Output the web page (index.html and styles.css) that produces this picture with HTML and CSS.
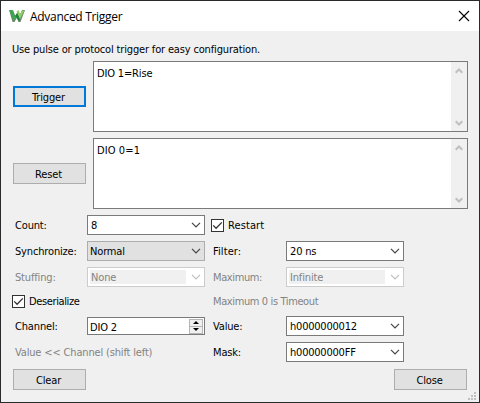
FILE: index.html
```html
<!DOCTYPE html>
<html lang="en">
<head>
<meta charset="utf-8">
<title>Advanced Trigger</title>
<link rel="stylesheet" href="styles.css">
</head>
<body>
<svg class="defs" width="0" height="0">
  <symbol id="down" viewBox="0 0 10 6"><path d="M1 .8 5 4.800 9 .8" fill="none" stroke="currentColor" stroke-width="1.2"/></symbol>
  <symbol id="check" viewBox="0 0 11 11"><path d="M1.200 5.400 4.100 8.300 9.800 2.400" fill="none" stroke="currentColor" stroke-width="1.3"/></symbol>
  <symbol id="thick" viewBox="0 0 8 6"><path d="M.7 4.800 4 1.500 7.300 4.800" fill="none" stroke="currentColor" stroke-width="2"/></symbol>
</svg>
<div class="window">
  <header class="titlebar">
    <svg class="logo" width="16" height="12" viewBox="0 0 16 12">
      <path d="M0 0h4l2.200 5.500L8.500 2l2 4L13 0h3l-4.500 12h-2L7.800 8 5.500 12h-2z" fill="#6f8a70"/>
      <path d="M.8.600h3L6.200 8 4.600 11z" fill="#35ab4c"/>
      <path d="M6.300 5.800 8.500 3l2.500 6-.8 2.500z" fill="#168a3c"/>
      <path d="M7.500 1.500 9.500 0l1.500 3.500L13.700.500h1.600L11 9z" fill="#93cf68"/>
    </svg>
    <h1 class="title">Advanced Trigger</h1>
    <svg class="close" width="12" height="12" viewBox="0 0 12 12"><path d="M1 1 11 11M11 1 1 11" stroke="#000" stroke-width="1.1"/></svg>
  </header>
  <main class="content">
    <p class="hint">Use pulse or protocol trigger for easy configuration.</p>
    <div class="event">
      <button class="btn focus">Trigger</button>
      <div class="area"><span class="area-text">DIO 1=Rise</span>
        <div class="scroll"><svg width="8" height="6"><use href="#thick"/></svg><svg class="flip" width="8" height="6"><use href="#thick"/></svg></div>
      </div>
    </div>
    <div class="event">
      <button class="btn">Reset</button>
      <div class="area"><span class="area-text loose">DIO 0=1</span>
        <div class="scroll"><svg width="8" height="6"><use href="#thick"/></svg><svg class="flip" width="8" height="6"><use href="#thick"/></svg></div>
      </div>
    </div>
    <div class="form">
      <span class="label">Count:</span>
      <div class="combo"><span class="value">8</span><svg width="10" height="6"><use href="#down"/></svg></div>
      <div class="check second"><i class="box"><svg width="11" height="11"><use href="#check"/></svg></i><span class="loose">Restart</span></div>

      <span class="label">Synchronize:</span>
      <div class="combo list"><span class="value">Normal</span><svg width="10" height="6"><use href="#down"/></svg></div>
      <span class="label right loose">Filter:</span>
      <div class="combo"><span class="value">20 ns</span><svg width="10" height="6"><use href="#down"/></svg></div>

      <span class="label dim">Stuffing:</span>
      <div class="combo off"><span class="value">None</span><svg width="10" height="6"><use href="#down"/></svg></div>
      <span class="label right dim tight">Maximum:</span>
      <div class="combo off"><span class="value">Infinite</span><svg width="10" height="6"><use href="#down"/></svg></div>

      <div class="check first"><i class="box"><svg width="11" height="11"><use href="#check"/></svg></i><span class="tight">Deserialize</span></div>
      <span class="label right wide dim tight">Maximum 0 is Timeout</span>

      <span class="label">Channel:</span>
      <div class="spin"><span class="value">DIO 2</span>
        <div class="steps"><i class="step"><b class="up"></b></i><i class="step"><b class="dn"></b></i></div>
      </div>
      <span class="label right">Value:</span>
      <div class="combo"><span class="value hex">h0000000012</span><svg width="10" height="6"><use href="#down"/></svg></div>

      <span class="label wide dim low">Value &lt;&lt; Channel (shift left)</span>
      <span class="label right">Mask:</span>
      <div class="combo"><span class="value hex">h00000000FF</span><svg width="10" height="6"><use href="#down"/></svg></div>
    </div>
    <footer class="actions"><button class="btn">Clear</button><button class="btn">Close</button></footer>
  </main>
  <svg class="grip" width="8" height="8" viewBox="0 0 8 8"><path d="M6 0h2v2H6zM3 3h2v2H3zM6 3h2v2H6zM0 6h2v2H0zM3 6h2v2H3zM6 6h2v2H6z" fill="#bfbfbf"/></svg>
</div>
</body>
</html>
```
FILE: styles.css
```css
* { box-sizing: border-box; }
body {
  margin: 0;
  font: 11px/14px "DejaVu Sans Condensed", "DejaVu Sans", sans-serif;
  font-stretch: condensed;
  letter-spacing: -0.16px;
  color: #000;
}
svg { display: block; flex: none; }
.defs { position: absolute; }
.window {
  position: relative;
  width: 480px;
  height: 403px;
  border: 1px solid #2b292b;
  background: #f0f0f0;
}
.titlebar {
  display: flex;
  align-items: center;
  height: 30px;
  padding: 0 9px 0 8px;
  background: #fff;
}
.title {
  flex: 1;
  margin: 0 0 0 5px;
  padding-top: 1px;
  font: 400 12px/16px "Open Sans", "Noto Sans", sans-serif;
  letter-spacing: -0.3px;
}
.content { padding: 12px 11px 0; }
.hint { height: 18px; margin: 0; white-space: nowrap; }
.event {
  display: flex;
  align-items: center;
  gap: 7px;
  margin: 0 0 6px 1px;
}
.btn {
  width: 73px;
  height: 21px;
  padding: 2px 2px 0 0;
  border: 1px solid #adadad;
  border-radius: 0;
  background: #e1e1e1;
  color: #000;
  font: inherit;
  letter-spacing: inherit;
  line-height: 17px;
}
.focus { border: 2px solid #0078d7; line-height: 15px; }
.area {
  display: flex;
  justify-content: space-between;
  width: 375px;
  height: 71px;
  border: 1px solid #7a7a7a;
  background: #fff;
}
.area-text { padding: 5px 0 0 3px; }
.scroll {
  display: flex;
  flex-direction: column;
  justify-content: space-between;
  align-items: center;
  width: 16px;
  padding: 6px 1px 5px 0;
  background: #f0f0f0;
  color: #bfbfbf;
}
.flip { transform: scaleY(-1); }
.form {
  display: grid;
  grid-template-columns: 74px 118px 81px 118px;
  grid-template-rows: 20px 20px 20px 17px 20px 20px;
  row-gap: 6px;
  align-items: center;
  margin-left: 1px;
}
.label { padding: 1px 0 0 2px; white-space: nowrap; }
.right { padding-left: 8px; }
.wide { grid-column: span 2; }
.dim { color: #838383; }
.low { padding-top: 2px; }
.tight { letter-spacing: -0.38px; }
.loose { letter-spacing: 0.1px; }
.hex { letter-spacing: -0.22px; }
.combo, .spin {
  display: flex;
  align-items: center;
  justify-content: space-between;
  height: 20px;
  padding: 0 3px 0 3px;
  border: 1px solid #7a7a7a;
  background: #fff;
}
.combo .value { padding-top: 2px; }
.combo svg { color: #444; }
.list { padding-left: 2px; border-color: #adadad; background: #e1e1e1; }
.off { padding: 0 3px 0 2px; border-color: #ccc; color: #838383; }
.off .value { width: 96px; height: 14px; padding: 1px 0 0 1px; background: #f0f0f0; }
.combo.off svg { color: #bfbfbf; }
.check { display: flex; align-items: center; gap: 4px; }
.check span { padding-top: 1px; }
.second { grid-column: span 2; padding-left: 6px; }
.first { grid-column: span 2; margin-left: -1px; }
.box { width: 13px; height: 13px; border: 1px solid #333; background: #fff; color: #333; }
.spin { height: 18px; padding: 0 1px 0 2px; }
.spin .value { padding-top: 3px; }
.steps { display: flex; flex-direction: column; width: 14px; height: 15px; }
.step {
  display: flex;
  flex: 1;
  align-items: center;
  justify-content: center;
  border: 1px solid #b5b5b5;
  background: #f0f0f0;
}
.step + .step { border-top: 0; }
.up, .dn { border: 3px solid transparent; border-top-width: 0; border-bottom: 3px solid #000; }
.dn { transform: scaleY(-1); }
.actions { display: flex; justify-content: space-between; padding: 7px 1px 0; }
.grip { position: absolute; right: 3px; bottom: 2px; }
```
